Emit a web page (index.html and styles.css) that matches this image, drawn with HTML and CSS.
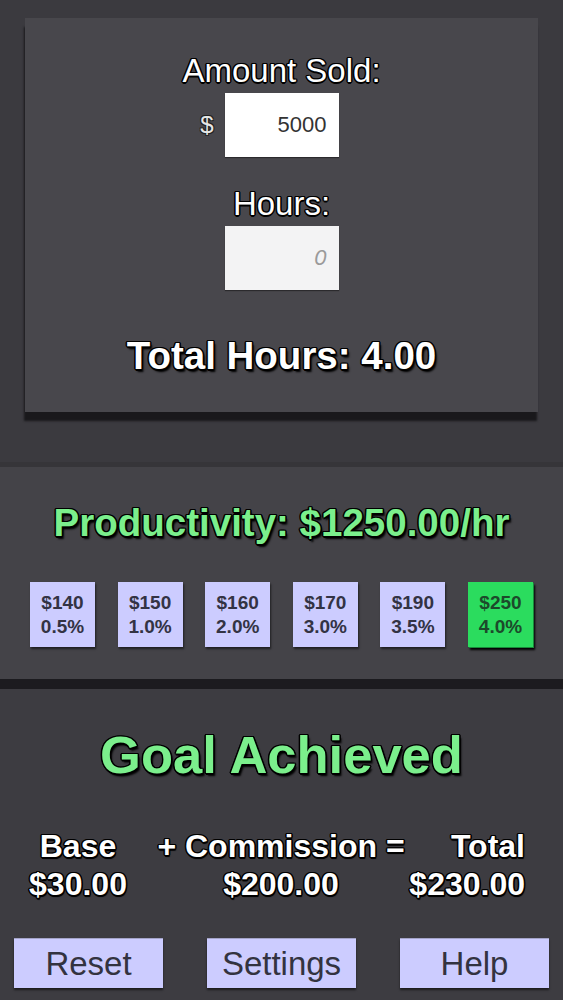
FILE: index.html
```html
<!DOCTYPE html>
<html lang="en">
<head>
<meta charset="utf-8">
<title>Commission Calculator</title>
<link rel="stylesheet" href="styles.css">
</head>
<body>
<div class="app">
  <section class="top">
    <div class="card">
      <div class="label">Amount Sold:</div>
      <div class="input-row">
        <span class="currency">$</span>
        <input class="field" type="text" value="5000">
        <span></span>
      </div>
      <div class="label label-hours">Hours:</div>
      <div class="input-row">
        <span></span>
        <input class="field field-muted" type="text" placeholder="0">
        <span></span>
      </div>
      <div class="total-hours">Total Hours: 4.00</div>
    </div>
  </section>

  <section class="productivity">
    <div class="prod-title">Productivity: $1250.00/hr</div>
    <div class="tiers">
      <div class="tier"><span>$140</span><span>0.5%</span></div>
      <div class="tier"><span>$150</span><span>1.0%</span></div>
      <div class="tier"><span>$160</span><span>2.0%</span></div>
      <div class="tier"><span>$170</span><span>3.0%</span></div>
      <div class="tier"><span>$190</span><span>3.5%</span></div>
      <div class="tier tier-active"><span>$250</span><span>4.0%</span></div>
    </div>
  </section>

  <section class="result">
    <div class="goal">Goal Achieved</div>
    <div class="pay-grid">
      <div class="cell c1">Base</div>
      <div class="cell c2">+ Commission =</div>
      <div class="cell c3">Total</div>
      <div class="cell c1">$30.00</div>
      <div class="cell c2">$200.00</div>
      <div class="cell c3">$230.00</div>
    </div>
    <div class="actions">
      <button class="btn">Reset</button>
      <button class="btn">Settings</button>
      <button class="btn">Help</button>
    </div>
  </section>
</div>
</body>
</html>
```

FILE: styles.css
```css
* {
  box-sizing: border-box;
}

html, body {
  margin: 0;
  padding: 0;
}

body {
  background: #3b3a3f;
  font-family: "Liberation Sans", Arial, Helvetica, sans-serif;
  width: 563px;
  height: 1000px;
  overflow: hidden;
}

.app {
  display: flex;
  flex-direction: column;
  height: 1000px;
}

/* ---------- top card ---------- */
.top {
  padding: 18px 25px 50px;
  background: #3b3a3f;
}

.card {
  background: #48474c;
  height: 394px;
  padding-top: 34px;
  display: flex;
  flex-direction: column;
  align-items: center;
  box-shadow: -1px 9px 2px #19181b;
}

.label {
  color: #fff;
  font-size: 33px;
  line-height: 38px;
  text-shadow:
    -1px -1px 0 #000, 1px -1px 0 #000,
    -1px 1px 0 #000, 1px 1px 0 #000,
    0 1.5px 0 #000, 0 -1.5px 0 #000,
    1.5px 0 0 #000, -1.5px 0 0 #000;
}

.label-hours {
  margin-top: 28px;
}

.input-row {
  display: grid;
  grid-template-columns: 1fr 114px 1fr;
  align-items: center;
  width: 100%;
  margin-top: 3px;
}

.currency {
  justify-self: end;
  margin-right: 11px;
  color: #e6e6e6;
  font-size: 24px;
  text-shadow:
    -1px -1px 0 #222, 1px -1px 0 #222,
    -1px 1px 0 #222, 1px 1px 0 #222;
}

.field {
  width: 114px;
  height: 64px;
  border: none;
  outline: none;
  background: #fff;
  text-align: right;
  padding: 0 12px 0 0;
  font-family: "Liberation Sans", Arial, sans-serif;
  font-size: 22px;
  color: #333;
  box-shadow: 0 1px 1px rgba(0, 0, 0, 0.4);
}

.field-muted {
  background: #f3f3f4;
}

.field-muted::placeholder {
  color: #9a9a9a;
  font-style: italic;
}

.total-hours {
  margin-top: 44px;
  color: #fff;
  font-weight: bold;
  font-size: 38.5px;
  line-height: 43px;
  white-space: nowrap;
  text-shadow:
    -1px -1px 0 #000, 1px -1px 0 #000,
    -1px 1px 0 #000, 1px 1px 0 #000,
    0 1.5px 0 #000, 0 -1.5px 0 #000,
    1.5px 0 0 #000, -1.5px 0 0 #000,
    2px 3px 2px #000;
}

/* ---------- productivity ---------- */
.productivity {
  background: #444348;
  border-top: 5px solid #363539;
  border-bottom: 10px solid #1c1b1f;
  padding: 34px 30px 32px;
  display: flex;
  flex-direction: column;
  align-items: center;
}

.prod-title {
  color: #7bef8c;
  font-weight: bold;
  font-size: 38.5px;
  line-height: 43px;
  white-space: nowrap;
  text-shadow:
    -1px -1px 0 #000, 1px -1px 0 #000,
    -1px 1px 0 #000, 1px 1px 0 #000,
    0 1.5px 0 #000, 0 -1.5px 0 #000,
    1.5px 0 0 #000, -1.5px 0 0 #000,
    2px 3px 2px #000;
}

.tiers {
  margin-top: 38px;
  width: 100%;
  display: flex;
  justify-content: space-between;
}

.tier {
  width: 65px;
  height: 65px;
  background: #ccccff;
  color: #333344;
  font-weight: bold;
  font-size: 19px;
  line-height: 24px;
  display: flex;
  flex-direction: column;
  align-items: center;
  justify-content: center;
  box-shadow: 1px 2px 2px rgba(0, 0, 0, 0.55);
}

.tier-active {
  background: #2bdc5e;
  color: #1c4a2b;
  box-shadow: 1px 1px 0 #188a3a, 2px 3px 2px #000;
}

/* ---------- result ---------- */
.result {
  flex: 1;
  background: #3d3c41;
  padding-top: 37px;
  display: flex;
  flex-direction: column;
  align-items: center;
}

.goal {
  color: #7bef8c;
  font-weight: bold;
  font-size: 52.5px;
  line-height: 58px;
  white-space: nowrap;
  text-shadow:
    -1px -1px 0 #000, 1px -1px 0 #000,
    -1px 1px 0 #000, 1px 1px 0 #000,
    0 1.5px 0 #000, 0 -1.5px 0 #000,
    1.5px 0 0 #000, -1.5px 0 0 #000,
    2px 3px 2px #000;
}

.pay-grid {
  margin-top: 43px;
  width: 100%;
  padding: 0 38px 0 28px;
  display: grid;
  grid-template-columns: 128px 250px 1fr;
  font-weight: bold;
  color: #fff;
  font-size: 32px;
  line-height: 38px;
}

.cell {
  display: flex;
  white-space: nowrap;
  text-shadow:
    -1px -1px 0 #000, 1px -1px 0 #000,
    -1px 1px 0 #000, 1px 1px 0 #000,
    0 1.5px 0 #000, 0 -1.5px 0 #000,
    1.5px 0 0 #000, -1.5px 0 0 #000,
    1px 2px 1px #000;
}

.c1 {
  width: 100px;
  justify-content: center;
}

.c2 {
  justify-content: center;
}

.c3 {
  justify-content: flex-end;
}

.actions {
  margin-top: 35px;
  width: 100%;
  padding: 0 14px;
  display: flex;
  justify-content: space-between;
}

.btn {
  width: 149px;
  height: 50px;
  background: #ccccff;
  border: none;
  border-top: 1px solid #a4a4c8;
  padding: 0;
  font-family: "Liberation Sans", Arial, sans-serif;
  font-size: 33px;
  color: #333340;
  box-shadow: 0 2px 2px rgba(0, 0, 0, 0.55);
}
```
